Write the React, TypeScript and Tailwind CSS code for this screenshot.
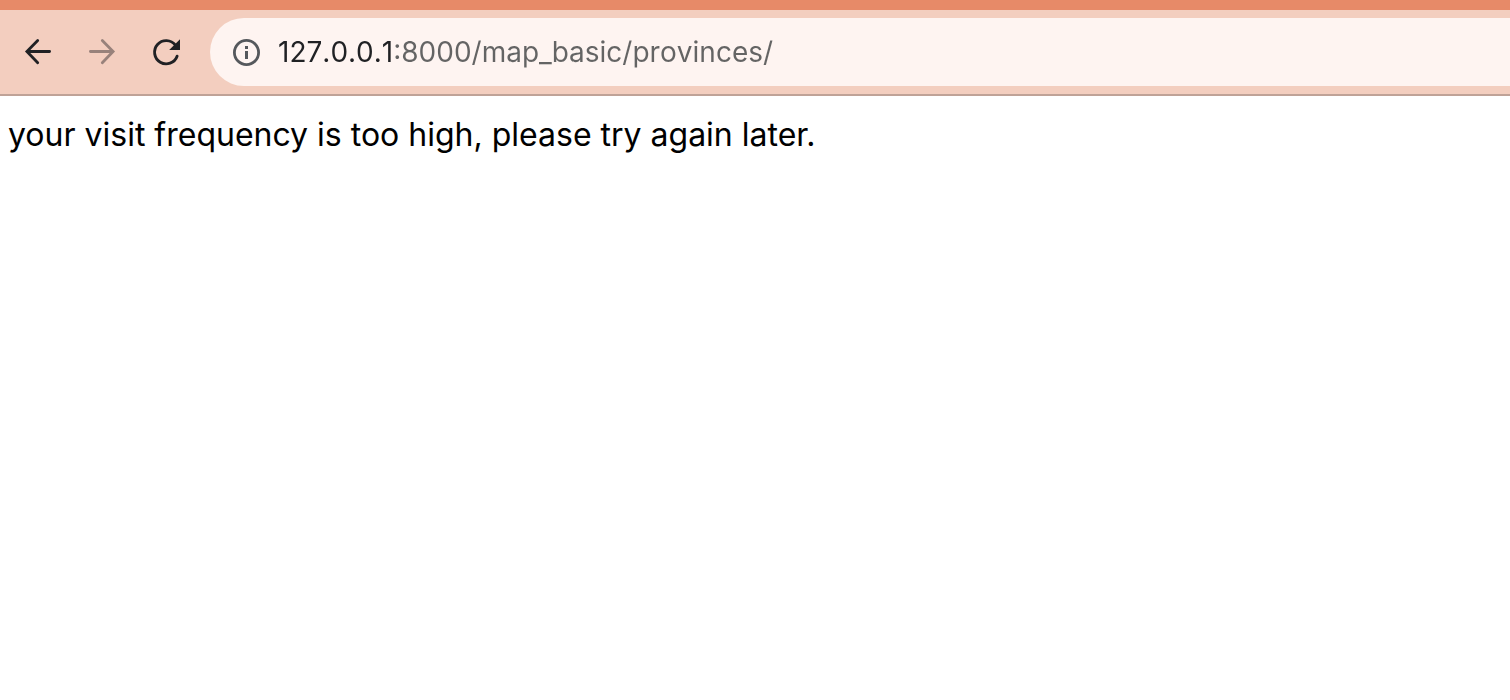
import { useState } from "react";

const HOME = "127.0.0.1:8000/map_basic/provinces/";

function BackIcon() {
  return (
    <svg width="32" height="32" viewBox="0 0 32 32" fill="none" stroke="currentColor" strokeWidth="2.8" strokeLinecap="round" strokeLinejoin="miter" aria-hidden="true">
      <path d="M27.6 15.5H5.4M15.7 4.4L4.9 15.5L15.7 26.8" />
    </svg>
  );
}

function ForwardIcon() {
  return (
    <svg width="32" height="32" viewBox="0 0 32 32" fill="none" stroke="currentColor" strokeWidth="2.8" strokeLinecap="round" strokeLinejoin="miter" aria-hidden="true">
      <path d="M4.4 15.5H26.6M16.3 4.4L27.1 15.5L16.3 26.8" />
    </svg>
  );
}

function ReloadIcon() {
  return (
    <svg width="32" height="32" viewBox="0 0 32 32" fill="none" aria-hidden="true">
      <path d="M27.1 20.2A11.6 11.6 0 1 1 25.4 9.2" stroke="currentColor" strokeWidth="2.9" strokeLinecap="round" />
      <path d="M30 3.2V14H19.2Z" fill="currentColor" />
    </svg>
  );
}

function InfoIcon() {
  return (
    <svg width="28" height="28" viewBox="0 0 28 28" fill="none" aria-hidden="true">
      <circle cx="14.5" cy="14.5" r="12.1" stroke="currentColor" strokeWidth="2.8" />
      <path d="M13 13h3v8h-3zM13 8h3v3h-3z" fill="currentColor" />
    </svg>
  );
}

export default function App() {
  const [url, setUrl] = useState(HOME);

  return (
    <div className="min-h-screen bg-white">
      <header className="border-t-10 border-b-2 border-t-[#e78a68] border-b-[#bfa297] bg-[#f3cebf]">
        <div className="flex items-center py-2 pl-1.5">
          <nav className="flex shrink-0 text-[#202124]" aria-label="Navigation">
            <button type="button" aria-label="Back" className="flex size-16 items-center justify-center">
              <BackIcon />
            </button>
            <button type="button" aria-label="Forward" disabled className="flex size-16 items-center justify-center text-[#98827b]">
              <ForwardIcon />
            </button>
            <button type="button" aria-label="Reload" className="flex size-16 items-center justify-center">
              <ReloadIcon />
            </button>
          </nav>
          <form
            className="ml-3 flex h-17 min-w-0 flex-1 items-center gap-[18px] rounded-l-full bg-[#fef4f1] pl-[22px]"
            onSubmit={(e) => e.preventDefault()}
          >
            <button type="button" aria-label="View site information" className="shrink-0 text-[#55585c]">
              <InfoIcon />
            </button>
            <input
              type="text"
              aria-label="Address"
              value={url}
              onChange={(e) => setUrl(e.target.value)}
              spellCheck={false}
              className="min-w-0 flex-1 bg-[linear-gradient(to_right,#202124_115px,#646464_115px)] bg-clip-text font-['Inter',sans-serif] text-[28px] leading-9 text-transparent caret-[#202124] outline-none [font-kerning:none]"
            />
          </form>
        </div>
      </header>
      <main className="px-2 py-4">
        <p className="font-['Inter',sans-serif] text-[32px] leading-[46px] text-black">
          your visit frequency is too high, please try again later.
        </p>
      </main>
    </div>
  );
}
